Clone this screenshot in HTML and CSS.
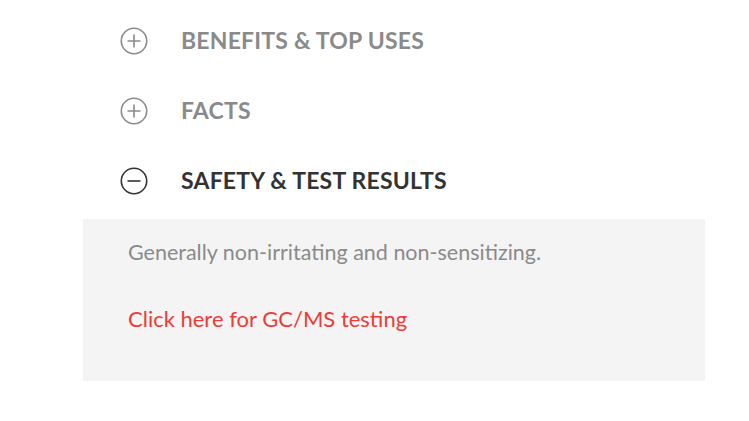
FILE: index.html
```html
<!DOCTYPE html>
<html lang="en">
<head>
<meta charset="utf-8">
<link rel="stylesheet" href="styles.css">
</head>
<body>
<div class="accordion">
  <div class="acc-head">
    <svg class="acc-icon" width="28" height="28" viewBox="0 0 28 28"><circle cx="14" cy="14" r="12.7" fill="none" stroke="currentColor" stroke-width="1.6"/><path d="M7.5 14h13M14 7.5v13" stroke="currentColor" stroke-width="1.6" fill="none"/></svg>
    <span class="acc-title">BENEFITS &amp; TOP USES</span>
  </div>
  <div class="acc-head">
    <svg class="acc-icon" width="28" height="28" viewBox="0 0 28 28"><circle cx="14" cy="14" r="12.7" fill="none" stroke="currentColor" stroke-width="1.6"/><path d="M7.5 14h13M14 7.5v13" stroke="currentColor" stroke-width="1.6" fill="none"/></svg>
    <span class="acc-title">FACTS</span>
  </div>
  <div class="acc-head is-open">
    <svg class="acc-icon" width="28" height="28" viewBox="0 0 28 28"><circle cx="14" cy="14" r="12.7" fill="none" stroke="currentColor" stroke-width="1.6"/><path d="M7.5 14h13" stroke="currentColor" stroke-width="1.6" fill="none"/></svg>
    <span class="acc-title">SAFETY &amp; TEST RESULTS</span>
  </div>
  <div class="acc-panel">
    <p class="acc-text">Generally non-irritating and non-sensitizing.</p>
    <a class="acc-link" href="#">Click here for GC/MS testing</a>
  </div>
</div>
</body>
</html>
```
FILE: styles.css
```css
html, body {
  margin: 0;
  padding: 0;
  background: #ffffff;
}
body {
  font-family: Lato, "Open Sans", sans-serif;
}
.accordion {
  padding-top: 5px;
  width: 705px;
}
.acc-head {
  height: 70px;
  display: flex;
  align-items: center;
  padding-left: 120px;
  color: #8a8a8a;
}
.acc-head.is-open {
  color: #333333;
}
.acc-icon {
  flex: none;
  display: block;
  margin-top: 2px;
}
.acc-title {
  margin-left: 33px;
  font-size: 23px;
  font-weight: 700;
  letter-spacing: 0.2px;
  line-height: 28px;
}
.acc-panel {
  margin-top: 4px;
  margin-left: 83px;
  background: #f4f4f4;
  padding: 18px 0 47px 45px;
  height: 97px;
}
.acc-text {
  margin: 0 0 37px;
  font-size: 21.5px;
  line-height: 30px;
  color: #8a8a8a;
}
.acc-link {
  display: block;
  font-size: 22px;
  line-height: 30px;
  color: #ef3b36;
  text-decoration: none;
}
```
